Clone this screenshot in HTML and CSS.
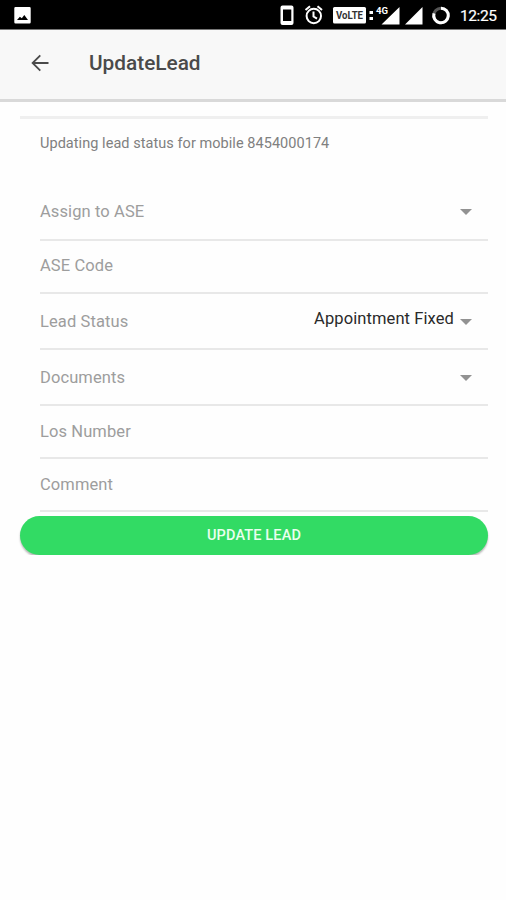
FILE: index.html
```html
<!DOCTYPE html>
<html lang="en">
<head>
<meta charset="utf-8">
<title>UpdateLead</title>
<link rel="stylesheet" href="styles.css">
</head>
<body>
<div class="status">
  <svg width="506" height="29" viewBox="0 0 506 29" fill="#fff">
    <path fill-rule="evenodd" d="M15.500 7h14a1.200 1.200 0 0 1 1.200 1.200v14a1.200 1.200 0 0 1-1.200 1.200h-14a1.200 1.200 0 0 1-1.200-1.200v-14a1.200 1.200 0 0 1 1.200-1.200zM17 20h11l-3.700-5-2.500 3.200-1.900-1.500z"/>
    <path fill-rule="evenodd" d="M282.500 5.500h9a2 2 0 0 1 2 2v15.500a2 2 0 0 1-2 2h-9a2 2 0 0 1-2-2v-15.500a2 2 0 0 1 2-2zM283 9.500v11.500h8.300v-11.500z"/>
    <g fill="none" stroke="#fff" stroke-width="2">
      <circle cx="313.800" cy="16" r="7.200"/>
      <path d="M305.500 10l4.500-3.800M322 10l-4.500-3.800M313.500 11.500v5l3.500 2.200"/>
      <circle cx="441" cy="15.500" r="7.300" stroke-width="3" stroke="#555"/>
      <path d="M441 8.200a7.300 7.300 0 1 1-7 5.200" stroke-width="3"/>
    </g>
    <rect x="333" y="7" width="33" height="16.500" rx="1.500"/>
    <text class="volte" x="336" y="19" textLength="27" lengthAdjust="spacingAndGlyphs">VoLTE</text>
    <path d="M369.500 11h3.500v3h-3.500zM369.500 17h3.500v3h-3.500zM399.500 7v17.500h-18zM422.500 7v17.500h-17.500z"/>
    <text class="net" x="376" y="14" textLength="12" lengthAdjust="spacingAndGlyphs">4G</text>
    <text class="time" x="460" y="21" textLength="37">12:25</text>
  </svg>
</div>
<header class="bar">
  <svg class="back" width="18" height="18" viewBox="0 0 18 18"><path d="M17.500 9H2M9.300 1.300L1.600 9l7.700 7.700"/></svg>
  <h1 class="title">UpdateLead</h1>
</header>
<main class="content">
  <p class="note">Updating lead status for mobile 8454000174</p>
  <div class="list">
    <div class="row"><span>Assign to ASE</span><i class="caret"></i></div>
    <div class="row input"><span>ASE Code</span></div>
    <div class="row choice"><span>Lead Status</span><span class="value">Appointment Fixed</span><i class="caret low"></i></div>
    <div class="row choice"><span>Documents</span><i class="caret"></i></div>
    <div class="row input plain"><span>Los Number</span></div>
    <div class="row input plain"><span>Comment</span></div>
  </div>
  <button class="submit">UPDATE LEAD</button>
</main>
</body>
</html>
```
FILE: styles.css
```css
* { box-sizing: border-box; }
body { margin: 0; background: #fefefe; font-family: Roboto, sans-serif; }
.status { height: 30px; background: #000; border-bottom: 1px solid #777; }
.status svg { display: block; }
.volte { font: 700 10px Roboto, sans-serif; fill: #333; }
.net { font: 700 9.5px Roboto, sans-serif; }
.time { font: 400 15.500px Roboto, sans-serif; stroke: #fff; stroke-width: .2px; }
.bar {
  height: 72px;
  display: flex;
  align-items: center;
  padding: 0 31px 4px;
  background: #f8f8f8;
  border-bottom: 3px solid #d9d9d9;
}
.back { fill: none; stroke: #4a4a4a; stroke-width: 1.800; }
.title { margin: 0 0 0 40px; font-size: 20.800px; font-weight: 500; line-height: 26px; color: #4a4a4a; }
.content { padding: 14px 18px 0 20px; }
.note {
  height: 69px;
  margin: 0;
  padding: 15px 20px 0;
  border-top: 3px solid #efefef;
  font-size: 14.500px;
  letter-spacing: .05px;
  line-height: 20px;
  color: #808080;
}
.list { padding-left: 20px; }
.row {
  height: 56px;
  display: flex;
  align-items: center;
  padding-right: 16px;
  border-bottom: 2px solid #e8e8e8;
  font-size: 16.500px;
  letter-spacing: .1px;
  line-height: 20px;
  color: #9d9d9d;
}
.input { height: 53px; padding-bottom: 2px; }
.plain { padding-bottom: 0; }
.choice { padding-top: 1px; }
.value { margin: -5px 6px 0 auto; color: #2a2a2a; }
.caret { margin-left: auto; border: 6px solid transparent; border-top: 6px solid #929292; border-bottom: 0; }
.low { margin-left: 0; }
.submit {
  display: block;
  width: 468px;
  height: 39px;
  margin: 4px 0 0;
  border: 0;
  border-radius: 20px;
  background: #32db64;
  box-shadow: 0 2px 2px rgba(0, 0, 0, .28);
  font: 500 14.500px Roboto, sans-serif;
  letter-spacing: .15px;
  color: #e9ffef;
}
```
